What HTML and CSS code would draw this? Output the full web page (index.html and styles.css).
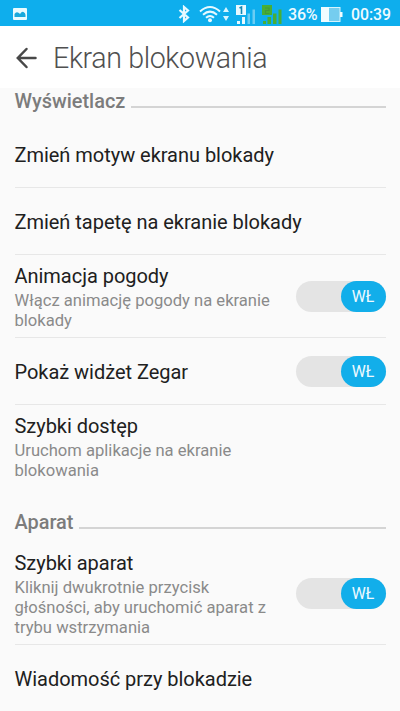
FILE: index.html
```html
<!DOCTYPE html>
<html lang="pl">
<head>
<meta charset="utf-8">
<title>Ekran blokowania</title>
<link rel="stylesheet" href="styles.css">
</head>
<body>
<header class="status">
  <svg class="picture" width="14" height="12" viewBox="0 0 14 12"><rect width="14" height="12" rx="1" fill="#e8fbff"/><path d="M1.500 9V6Q3 3.500 5 4.500Q6.500 5 7 6Q9 3 10.500 4Q12.500 5 12.500 7V9Z" fill="#18a9dc"/></svg>
  <svg class="bluetooth" width="12" height="18" viewBox="0 0 12 18"><path d="M1.500 5L10 12.500L6 16V2L10 5.500L1.500 13" fill="none" stroke="#e8f9ff" stroke-width="2.200"/></svg>
  <svg class="wifi" width="22" height="18" viewBox="0 0 22 18"><g fill="none" stroke="#e8f9ff" stroke-width="2"><path d="M1 6.500Q11-2.500 21 6.500"/><path d="M4 9.700Q11 3.500 18 9.700"/><path d="M7 12.800Q11 9.200 15 12.800"/></g><circle cx="11" cy="15.300" r="2" fill="#e8f9ff"/></svg>
  <svg class="traffic" width="6" height="14" viewBox="0 0 6 14"><path d="M0 5L3 0L6 5ZM0 9H6L3 14Z" fill="#d6f5ff"/></svg>
  <svg class="sim" width="21" height="19" viewBox="0 0 21 19"><path d="M0 0H10V10H0Z" fill="#e8f9ff"/><path d="M3.500 3L5.500 2V9" fill="none" stroke="#1688b4" stroke-width="1.600"/><path d="M1 16H4V19H1ZM6 12H9V19H6Z" fill="#e8f9ff"/><path d="M11.500 8.500H14V19H11.500ZM16.500 4.500H19V19H16.500Z" fill="#6bcdf3"/></svg>
  <svg class="sim" width="21" height="19" viewBox="0 0 21 19"><path d="M0 0H10V10H0ZM1 16H4V19H1ZM5.500 12H9V19H5.500ZM11 8.500H14.500V19H11ZM16.500 4.500H19.500V19H16.500Z" fill="#48ae35"/><path d="M3 3H7V5.500H3.500V8.500H7.500" fill="none" stroke="#41993c" stroke-width="1.200"/></svg>
  <span class="percent">36%</span>
  <svg class="battery" width="22" height="15" viewBox="0 0 22 15"><rect x=".5" y=".5" width="18.500" height="14" fill="#75cdef" stroke="#d6f4fd"/><path d="M0 0H8V15H0ZM19 5H21.500V10H19Z" fill="#f1fcff"/></svg>
  <span class="clock">00:39</span>
</header>
<div class="appbar">
  <svg class="back" width="22" height="22" viewBox="0 0 22 22"><path d="M20.500 11H3M11.500 2L2.800 11L11.500 20" fill="none" stroke="#484848" stroke-width="2.500" stroke-linecap="round"/></svg>
  <h1>Ekran blokowania</h1>
</div>
<main>
  <h2 class="section"><span>Wyświetlacz</span></h2>
  <div class="row"><p class="title">Zmień motyw ekranu blokady</p></div>
  <div class="row"><p class="title">Zmień tapetę na ekranie blokady</p></div>
  <div class="row two-line"><div><p class="title">Animacja pogody</p><p class="summary">Włącz animację pogody na ekranie<br>blokady</p></div><div class="switch"><span>WŁ</span></div></div>
  <div class="row"><p class="title">Pokaż widżet Zegar</p><div class="switch"><span>WŁ</span></div></div>
  <div class="row two-line last"><div><p class="title">Szybki dostęp</p><p class="summary">Uruchom aplikacje na ekranie<br>blokowania</p></div></div>
  <h2 class="section camera"><span>Aparat</span></h2>
  <div class="row three-line"><div><p class="title">Szybki aparat</p><p class="summary">Kliknij dwukrotnie przycisk<br>głośności, aby uruchomić aparat z<br>trybu wstrzymania</p></div><div class="switch"><span>WŁ</span></div></div>
  <div class="row last"><p class="title">Wiadomość przy blokadzie</p></div>
</main>
</body>
</html>
```
FILE: styles.css
```css
* { box-sizing: border-box; }
body, h1, h2, p { margin: 0; }
body {
  height: 711px;
  overflow: hidden;
  background: #fafafa;
  color: #202020;
  font-family: Roboto, sans-serif;
}
svg { display: block; flex: none; }
.status {
  height: 26px;
  padding: 2px 9px 0 13px;
  display: flex;
  align-items: center;
  background: #0eaeed;
  color: #eefaff;
  font-size: 16px;
  font-weight: 500;
}
.bluetooth { margin-left: 151px; }
.wifi { margin-left: 9px; }
.traffic { margin-left: 2px; }
.sim { margin-left: 7px; }
.sim + .sim { margin-left: 5px; }
.percent { width: 29px; margin-left: 5px; letter-spacing: -.2px; white-space: nowrap; }
.battery { margin-left: 4px; }
.clock { margin-left: 8px; font-size: 15.8px; white-space: nowrap; }
.appbar {
  height: 62px;
  padding: 2px 15px 0;
  display: flex;
  align-items: center;
  gap: 16px;
  background: #fff;
}
h1 {
  color: #505050;
  font-size: 28.6px;
  font-weight: 300;
  letter-spacing: -.37px;
  white-space: nowrap;
}
main { padding: 0 14.5px; }
.section {
  height: 33px;
  padding-top: 2px;
  display: flex;
  gap: 6px;
  color: #7c7c7c;
  font-size: 19.9px;
  line-height: 23px;
  font-weight: 500;
}
.section::after {
  content: "";
  height: 2px;
  flex: 1;
  margin-top: 16px;
  background: #d4d4d4;
}
.camera { height: 55px; padding-top: 23px; }
.row {
  height: 67px;
  padding-top: 2px;
  display: flex;
  align-items: center;
  justify-content: space-between;
  border-bottom: 1px solid #e7e7e7;
}
.two-line { height: 83px; }
.three-line { height: 102px; }
.last { border-bottom-color: transparent; }
.title {
  font-size: 20px;
  line-height: 25px;
  letter-spacing: -.03px;
  white-space: nowrap;
}
.two-line .title { padding-top: 1px; }
.summary {
  margin-top: 2px;
  color: #8a8a8a;
  font-size: 16.6px;
  line-height: 19.7px;
  white-space: nowrap;
}
.switch {
  width: 90px;
  height: 31px;
  flex: none;
  display: flex;
  justify-content: flex-end;
  margin-top: -2px;
  border-radius: 16px;
  background: #e4e4e4;
}
.switch span {
  width: 45px;
  border-radius: 16px;
  background: #12aeea;
  color: #effaff;
  font-size: 15.8px;
  line-height: 32px;
  text-align: center;
}
```
